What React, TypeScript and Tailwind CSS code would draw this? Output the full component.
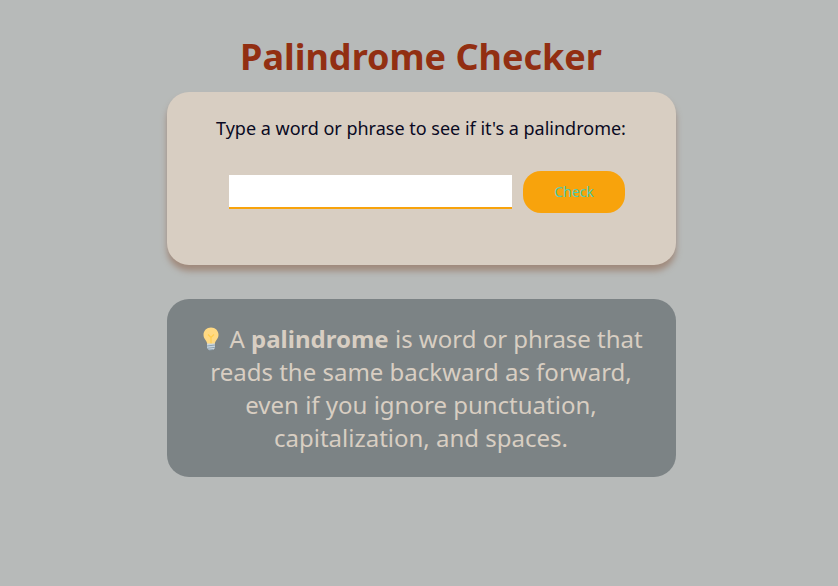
export default function App() {
  return (
    <main className="flex min-h-screen flex-col items-center bg-[#b7bab9] pl-1 pt-8 font-['Noto_Sans',sans-serif] text-[#0a0a23]">
      <h1 className="text-center text-4xl leading-[50px] font-bold text-[#922f12]">Palindrome Checker</h1>
      <form
        onSubmit={(e) => e.preventDefault()}
        className="mt-[10px] flex w-full max-w-[509px] flex-col items-center rounded-[22px] bg-[#d8cec2] pt-6 pb-[52px] shadow-[0_6px_6px_#a08a7c]"
      >
        <label htmlFor="text-input" className="text-lg leading-[25px]">
          Type a word or phrase to see if it's a palindrome:
        </label>
        <div className="mt-[30px] flex items-center gap-[11px] pl-3">
          <input id="text-input" type="text" className="h-[34px] w-[283px] border-b-2 border-[#f8a30c] bg-white text-center text-lg outline-none" />
          <button type="submit" className="h-[42px] w-[102px] rounded-[18px] bg-[#f8a30c] text-sm text-[#4fcbb4]">
            Check
          </button>
        </div>
      </form>
      <section className="mt-[34px] w-full max-w-[509px] rounded-[22px] bg-[#7c8385] px-7 py-[23px] text-center text-2xl leading-[33px] text-[#d8cec2]">
        <p>
          <svg viewBox="2 0 24 28" className="inline h-[28px] w-[24px] align-[-5px]" aria-hidden="true">
            <path d="M14 2.500C9.700 2.500 6.500 5.700 6.500 9.800c0 4.200 3.200 5.400 3.800 9.200h7.400c.6-3.800 3.800-5 3.800-9.200 0-4.100-3.200-7.300-7.500-7.300z" fill="#ffd983" />
            <path d="M11 9.500l3 3 3-3M14 12.500V19" fill="none" stroke="#ffcc4d" strokeWidth="1.200" />
            <path d="M10 18.500h8v4.500l-2 2h-4l-2-2z" fill="#ccd6dd" />
            <path d="M10 21l8-1M10 23.300l8-1M12 25l4-.5" stroke="#8da3b3" strokeWidth="1" />
          </svg>{' '}
          A <b>palindrome</b> is word or phrase that reads the same backward as forward, even if you ignore punctuation, capitalization, and spaces.
        </p>
      </section>
    </main>
  )
}
